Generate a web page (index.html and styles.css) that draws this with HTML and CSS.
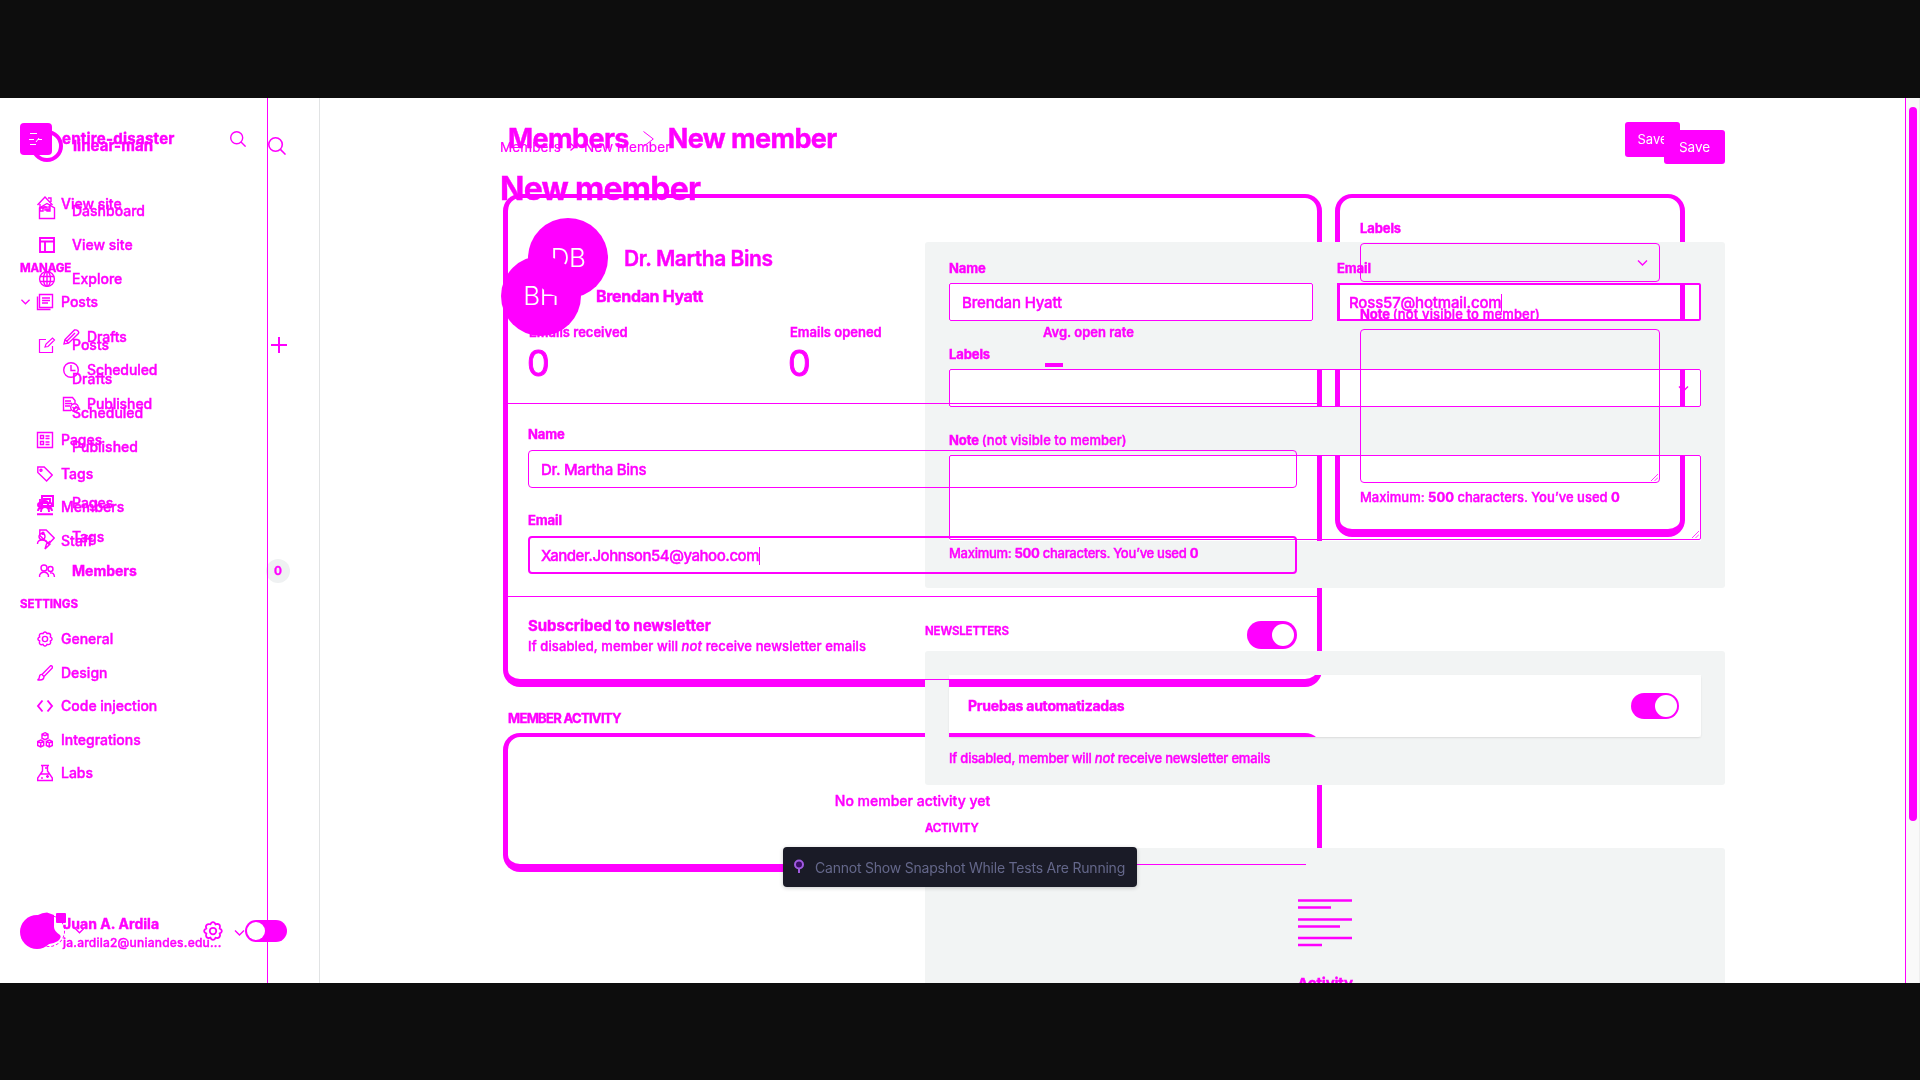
FILE: index.html
```html
<!DOCTYPE html>
<html lang="en">
<head>
<meta charset="utf-8">
<title>Members - New member</title>
<link rel="stylesheet" href="styles.css">
</head>
<body>
<svg class="defs" aria-hidden="true">
  <symbol id="search" viewBox="0 0 16 16"><circle cx="6.7" cy="6.7" r="6"/><path d="M11 11l4.600 4.600"/></symbol>
  <symbol id="gear" viewBox="0 0 16 16"><circle cx="8" cy="8" r="2.600"/><path d="M6.500 1.700Q8 .2 9.500 1.700L10 2.700L11.300 2.300Q13.600 2.300 13.600 4.600L13.300 6L14.300 6.600Q15.800 8 14.300 9.500L13.300 10L13.700 11.300Q13.500 13.600 11.400 13.600L10 13.300L9.500 14.300Q8 15.800 6.500 14.300L6 13.300L4.700 13.700Q2.400 13.500 2.400 11.400L2.700 10L1.700 9.500Q.2 8 1.700 6.500L2.700 6L2.300 4.700Q2.500 2.400 4.600 2.400L6 2.700Z"/></symbol>
  <symbol id="tag" viewBox="0 0 16 16"><path d="M.8 1h6.400l8 8-5.600 6L.8 6.500z"/><circle cx="4" cy="4.200" r="1"/></symbol>
  <symbol id="chev" viewBox="0 0 10 6"><path d="M.5.5L5 5L9.500.5"/></symbol>
  <symbol id="grip" viewBox="0 0 8 8"><path d="M0 8L8 0M4 8L8 4"/></symbol>
</svg>
<div class="stage">

  <div class="layer frames">
    <div class="frame-col"><div class="frame details"></div><div class="frame events"></div></div>
    <div class="frame notes"></div>
  </div>

  <div class="layer new">
    <aside class="side">
      <header class="side-head">
        <span class="ring"></span><b class="site">linear-man</b>
        <svg class="ic find"><use href="#search"/></svg>
      </header>
      <nav>
        <a class="item"><svg class="ic" viewBox="0 0 16 16"><path d="M.5 5V15.500H15.500V5L8 .5ZM6 3v4h4V3M1 5h4"/></svg>Dashboard</a>
        <a class="item"><svg class="ic thick" viewBox="0 0 16 16"><path d="M1 1h14v14H1zM1 4.500h14M6 4.500V15"/></svg>View site</a>
        <a class="item"><svg class="ic" viewBox="0 0 16 16"><circle cx="8" cy="8" r="7.400"/><ellipse cx="8" cy="8" rx="3.500" ry="7.400"/><path d="M1 5.500h14M1 10.500h14M8 .5v15"/></svg>Explore</a>
        <a class="item gap-a"><svg class="ic thin" viewBox="0 0 16 16"><path d="M7 2.500H.5v13h13V9M6 10l1-3 6.500-6 2 2-6.500 6.500z"/></svg>Posts<svg class="plus" viewBox="0 0 16 16"><path d="M8 0v16M0 8h16"/></svg></a>
        <a class="item"><span class="ic"></span>Drafts</a>
        <a class="item"><span class="ic"></span>Scheduled</a>
        <a class="item"><span class="ic"></span>Published</a>
        <a class="item gap-b"><svg class="ic thick" viewBox="0 0 16 16"><path d="M3 1h11v10H3zM1 4v8h11M5 4h6v4H5z"/></svg>Pages</a>
        <a class="item"><svg class="ic"><use href="#tag"/></svg>Tags</a>
        <a class="item on"><svg class="ic" viewBox="0 0 16 16"><circle cx="5" cy="5" r="3"/><circle cx="11.500" cy="6" r="2.500"/><path d="M.6 14v-2Q2 9 5 9t4.400 3v2M11 10q4-1 4.500 4"/></svg>Members<i class="count">0</i></a>
      </nav>
      <footer class="side-foot">
        <span class="face"></span><svg class="chev a"><use href="#chev"/></svg>
        <svg class="ic cog"><use href="#gear"/></svg><span class="night"></span>
      </footer>
    </aside>
    <main class="main">
      <div class="crumbs"><span>Members</span><svg class="arrow" viewBox="0 0 5 8"><path d="M.5.5L4.500 4L.5 7.500"/></svg><span>New member</span><button class="save over">Save</button></div>
      <h1>New member</h1>
      <div class="cols">
        <div class="person"><span class="avatar over">BH</span><b>Brendan Hyatt</b></div>
        <div class="panels">
          <section class="panel p-form">
            <div class="pair">
              <label><span class="lab">Name</span><span class="field">Brendan Hyatt</span></label>
              <label><span class="lab">Email</span><span class="field focus">Ross57@hotmail.com<i class="caret"></i></span></label>
            </div>
            <label><span class="lab">Labels</span><span class="field pick"><svg class="chev"><use href="#chev"/></svg></span></label>
            <label><span class="lab">Note <em>(not visible to member)</em></span><span class="field area"><svg class="grip"><use href="#grip"/></svg></span></label>
            <p class="max">Maximum: <b>500</b> characters. You’ve used <b>0</b></p>
          </section>
          <h4>NEWSLETTERS</h4>
          <section class="panel p-news">
            <div class="row"><b>Pruebas automatizadas</b><span class="toggle small"></span></div>
            <p class="hint">If disabled, member will <i>not</i> receive newsletter emails</p>
          </section>
          <h4>ACTIVITY</h4>
          <section class="panel p-act">
            <svg class="lines" viewBox="0 0 54 48"><path d="M0 1.500h54M0 8.500h33M0 20.500h54M0 27.500h42M0 39h54M0 46h24"/></svg>
            <b>Activity</b>
          </section>
        </div>
      </div>
    </main>
    <div class="scroll"><span></span></div>
  </div>

  <div class="layer old">
    <aside class="side">
      <header class="side-head">
        <svg class="logo" viewBox="0 0 32 32"><rect width="32" height="32" rx="4"/><path d="M10 10.500h7M9 16.500h5M18 16.500h4M16 19l3-4M10 21.500h6"/></svg>
        <b class="site">entire-disaster</b>
        <svg class="ic find"><use href="#search"/></svg>
      </header>
      <nav>
        <a class="item"><svg class="ic" viewBox="0 0 16 16"><path d="M.5 9L8 1l7.500 8M11 2h3v4M3 8v7h3v-4h4v4h3V8"/></svg>View site</a>
        <h5 class="first">MANAGE</h5>
        <a class="item posts"><svg class="chev"><use href="#chev"/></svg><svg class="ic" viewBox="0 0 16 16"><path d="M2.500.5h13v13h-13zM.5 2.500v13h13M5 4h8M5 6.500h8M5 9h6"/></svg>Posts</a>
        <div class="subs">
          <a class="item"><svg class="ic" viewBox="0 0 16 16"><path d="M1 15l1-4.500L11.500 1Q13.500.5 15 2t0 3L5.500 14.200zM4 12l8-8M2 10.500l3.500 3.500"/></svg>Drafts</a>
          <a class="item"><svg class="ic" viewBox="0 0 16 16"><circle cx="8" cy="8" r="7.300"/><path d="M8 3v5.500h4.500"/></svg>Scheduled</a>
          <a class="item"><svg class="ic" viewBox="0 0 16 16"><path d="M8 14.500H.5v-13h9l2.500 3V7M2 5h6M2 7.500h7M2 10h5"/><circle cx="11.500" cy="11.500" r="3.800"/><path d="M9.500 11l2 2 2-3"/></svg>Published</a>
        </div>
        <div class="group">
          <a class="item"><svg class="ic" viewBox="0 0 16 16"><path d="M.5.5h15v15H.5zM3.500 3.500h3v3h-3zM3.500 9.500h3v3h-3zM8.500 4h4M8.500 6.500h4M8.500 10h4M8.500 12.500h4"/></svg>Pages</a>
          <a class="item"><svg class="ic"><use href="#tag"/></svg>Tags</a>
          <a class="item"><svg class="ic thick" viewBox="0 0 16 16"><circle cx="8" cy="5" r="3"/><circle cx="3" cy="6" r="2"/><circle cx="13" cy="6" r="2"/><path d="M4 13q0-5 4-5t4 5M1 12q0-3 3-3M15 12q0-3-3-3M0 15.300h16"/></svg>Members</a>
          <a class="item"><svg class="ic" viewBox="0 0 16 16"><circle cx="5" cy="3.500" r="3"/><path d="M.5 11q0-4 4.500-4 4 0 5 2l3 2-5 5 1.500-5 4-3"/></svg>Staff</a>
        </div>
        <h5 class="second">SETTINGS</h5>
        <div class="group b">
          <a class="item"><svg class="ic"><use href="#gear"/></svg>General</a>
          <a class="item"><svg class="ic" viewBox="0 0 16 16"><path d="M.5 15q2-1 2-3.500Q3 9 5 9.500L13.500.8Q15.800.3 15.300 3L7 11.500Q7 15 3 15zM5 9.500l2 2"/></svg>Design</a>
          <a class="item"><svg class="ic thick" viewBox="0 0 16 16"><path d="M5.500 2.500L1 8l4.500 5.500M10.500 2.500L15 8l-4.500 5.500"/></svg>Code injection</a>
          <a class="item"><svg class="ic" viewBox="0 0 16 16"><path d="M8 .7l3 1.500v4L8 7.700 5 6.200v-4zM3.700 8l3 1.500v4l-3 1.500-3-1.500v-4zM12.300 8l3 1.500v4l-3 1.500-3-1.500v-4zM5 2.200l3 1.500 3-1.500M.7 9.500l3 1.500 3-1.500M9.300 9.500l3 1.500 3-1.500M3.700 11v4M12.300 11v4"/></svg>Integrations</a>
          <a class="item"><svg class="ic" viewBox="0 0 16 16"><path d="M4 .5h8M5.500.5V6L.7 13v2.500h14.600V13L10.500 6V.5M3 9h10M5 12v2M9 11.500h3M10.500 10v3M8 3h2"/></svg>Labs</a>
        </div>
      </nav>
      <footer class="side-foot">
        <svg class="face" viewBox="0 0 46 38"><circle cx="17" cy="20" r="17"/><path d="M12 12L18 3Q22 .5 27 .5L34 3v12q0 4 6 8 2 2-2 6-8 5-16 2z"/><rect x="36" y="1" width="10" height="10" rx="1"/></svg>
        <div class="who"><b>Juan A. Ardila</b><span>ja.ardila2@uniandes.edu...</span></div>
        <svg class="chev"><use href="#chev"/></svg>
      </footer>
    </aside>
    <main class="main">
      <header class="title"><span>Members</span><svg class="arrow" viewBox="0 0 11 16"><path d="M.5.5L10.300 8L.5 15.500"/></svg><span>New member</span><button class="save">Save</button></header>
      <div class="cols">
        <div class="left">
          <section class="card details">
            <div class="person"><span class="avatar">DB</span><b>Dr. Martha Bins</b></div>
            <div class="stats">
              <div><b>Emails received</b><span>0</span></div>
              <div><b>Emails opened</b><span>0</span></div>
              <div><b>Avg. open rate</b><span class="none"></span></div>
            </div>
            <div class="form">
              <label><span class="lab">Name</span><span class="field">Dr. Martha Bins</span></label>
              <label><span class="lab">Email</span><span class="field focus">Xander.Johnson54@yahoo.com<i class="caret"></i></span></label>
            </div>
            <div class="sub">
              <div><b>Subscribed to newsletter</b><p class="hint">If disabled, member will <i>not</i> receive newsletter emails</p></div>
              <span class="toggle"></span>
            </div>
          </section>
          <h4>MEMBER ACTIVITY</h4>
          <section class="card events">No member activity yet</section>
        </div>
        <section class="notes">
          <label><span class="lab">Labels</span><span class="field pick"><svg class="chev"><use href="#chev"/></svg></span></label>
          <label><span class="lab">Note <em>(not visible to member)</em></span><span class="field area"><svg class="grip"><use href="#grip"/></svg></span></label>
          <p class="max">Maximum: <b>500</b> characters. You’ve used <b>0</b></p>
        </section>
      </div>
    </main>
  </div>

  <div class="toast"><svg viewBox="0 0 12 15"><circle cx="6" cy="5.500" r="4"/><path d="M6 9.500v4.500"/></svg><span>Cannot Show Snapshot While Tests Are Running</span></div>
</div>
</body>
</html>
```
FILE: styles.css
```css
:root { --m: #ff00ff; --g: #f2f4f4; }
* { box-sizing: border-box; margin: 0; padding: 0; }
body { width: 1920px; height: 1080px; overflow: hidden; padding: 98px 0 97px; background: #0d0d0d; color: var(--m); font: 500 14px/20px Inter, "Liberation Sans", sans-serif; }
svg { fill: none; stroke: var(--m); stroke-width: 1.4; flex: none; overflow: visible; }
.defs { display: none; }
.thick { stroke-width: 1.900; }
.thin { stroke-width: 1.2; }
em { font-style: normal; font-weight: 500; }
button { border: 0; font: inherit; }
.stage { position: relative; display: grid; height: 885px; overflow: hidden; background: #fff; }
.layer { grid-area: 1 / 1; display: flex; height: 885px; overflow: hidden; -webkit-text-stroke: .4px var(--m); }
.old { position: relative; z-index: 1; }

/* card outlines */
.frames { padding: 96px 0 0 503px; gap: 13px; align-items: flex-start; }
.frame-col { display: flex; flex-direction: column; gap: 46px; width: 819px; }
.frame { border: solid var(--m); border-width: 4px 5px 8px; border-radius: 17px; }
.frame.details { height: 493px; }
.frame.events { height: 139px; }
.frame.notes { width: 350px; height: 343px; }

/* shared pieces */
.side { display: flex; flex-direction: column; flex: none; }
.side-head { display: flex; align-items: center; }
.item { display: flex; align-items: center; white-space: nowrap; }
.ic { width: 16px; height: 16px; flex: none; }
.chev { width: 11px; height: 6px; }
.grip { width: 7px; height: 7px; stroke-width: .9; }
.avatar { display: flex; align-items: center; justify-content: center; width: 80px; height: 80px; border-radius: 50%; background: var(--m); color: #fff; font-size: 26px; font-weight: 300; -webkit-text-stroke: 0; flex: none; }
.person { display: flex; align-items: center; white-space: nowrap; }
.over { position: relative; z-index: 2; mix-blend-mode: multiply; }
.save { margin-left: auto; background: var(--m); color: #fff; border-radius: 3px; font-size: 13px; font-weight: 400; -webkit-text-stroke: 0; }
label { display: block; }
.lab { display: block; font-size: 13px; font-weight: 700; letter-spacing: -.1px; white-space: nowrap; }
.field { display: flex; align-items: center; height: 38px; padding: 1px 0 0 12px; border: 1px solid var(--m); border-radius: 4px; font-size: 15px; font-weight: 500; letter-spacing: -.3px; }
.focus { border-width: 2px; padding-left: 11px; }
.caret { width: 1px; height: 18px; background: var(--m); }
.pick { justify-content: flex-end; }
.area { align-items: flex-end; justify-content: flex-end; padding: 0 1px 1px 0; }
.max, .hint { font-size: 13px; white-space: nowrap; }
.max b { font-weight: 700; }
.toggle { width: 50px; height: 28px; padding: 3px; border-radius: 14px; background: var(--m); display: flex; justify-content: flex-end; flex: none; }
.toggle::after { content: ""; width: 22px; height: 22px; border-radius: 50%; background: #fff; }
.toggle.small { width: 48px; height: 26px; padding: 2px; }

/* narrow-sidebar view */
.old .side { width: 268px; border-right: 1px solid var(--m); }
.old .side-head { height: 80px; padding: 1px 21px 0 20px; margin-bottom: 9px; }
.logo { width: 32px; height: 32px; fill: var(--m); stroke: none; }
.logo path { stroke: #fff; stroke-width: 1; fill: none; }
.site { font-size: 15px; font-weight: 700; white-space: nowrap; }
.old .site { margin-left: 10px; letter-spacing: .25px; }
.old .find { margin-left: auto; }
.old .item { height: 33.600px; padding-left: 37px; gap: 8px; }
.old h5 { height: 34px; padding-left: 20px; font-size: 11.500px; line-height: 35px; font-weight: 700; }
.old h5.first { margin-top: 30.400px; letter-spacing: -.1px; }
.old h5.second { margin-top: 29.400px; }
.old .posts { height: 34px; padding-left: 21px; gap: 0; }
.posts .chev { width: 9px; margin-right: 7px; }
.posts .ic { margin-right: 8px; }
.subs { margin-top: 1px; }
.old .subs .item { padding-left: 63px; gap: 8px; letter-spacing: -.1px; }
.group { margin-top: 2.400px; }
.group.b { margin-top: 1.200px; }
.old .side-foot { display: flex; align-items: center; height: 98px; margin-top: auto; padding: 0 0 3px 20px; }
.face { flex: none; }
.old .face { width: 46px; height: 38px; margin-right: -3px; margin-top: -3px; fill: var(--m); stroke: none; }
.who { width: 171px; font-size: 12px; line-height: 19px; white-space: nowrap; letter-spacing: .22px; }
.who b, .who span { display: block; }
.who b { font-size: 14px; font-weight: 700; letter-spacing: .05px; }
.old .main { flex: none; width: 1417px; padding-left: 240px; }
.title { display: flex; align-items: center; height: 80px; padding-top: 2px; margin-bottom: 20px; font-size: 27px; font-weight: 700; letter-spacing: -.62px; white-space: nowrap; }
.title .arrow { width: 11px; height: 16px; margin: 0 14px 0 14px; stroke-width: 1; }
.old .save { width: 55px; height: 35px; letter-spacing: 0; margin-right: 5px; }
.old .cols { display: grid; grid-template-columns: 809px 340px; gap: 23px; }
.old .card.details { height: 482px; }
.old .card::after { content: ""; display: block; height: 1px; margin: 0 11px; background: var(--m); }
.old .person { padding: 20px 0 24px 20px; gap: 16px; font-size: 21px; letter-spacing: -.45px; }
.old .person b { font-weight: 600; padding-top: 2px; }
.stats { display: grid; grid-template-columns: 261px 253px 1fr; height: 82px; padding-left: 21px; border-bottom: 1px solid var(--m); }
.stats b { display: block; font-size: 13px; font-weight: 600; margin-bottom: 1px; }
.stats span { display: block; font-size: 36px; line-height: 40px; font-weight: 400; margin-left: -2px; -webkit-text-stroke: .9px var(--m); }
.stats .none { width: 18px; height: 4px; margin: 21px 0 0 2px; background: var(--m); }
.form { height: 193px; padding: 20px 20px 0; border-bottom: 1px solid var(--m); }
.form .lab { height: 26px; }
.form .field { margin-bottom: 22px; }
.old .focus { letter-spacing: -.47px; }
.sub { display: flex; align-items: flex-start; justify-content: space-between; height: 82px; padding: 19px 20px 0 20px; }
.sub b { font-size: 15px; font-weight: 700; letter-spacing: -.02px; }
.old .hint { letter-spacing: .11px; }
.sub .toggle { margin-top: 5px; }
.old h4 { padding-top: 28px; height: 57px; font-size: 13px; font-weight: 700; letter-spacing: -.68px; }
.old .card.events { height: 128px; display: flex; flex-direction: column; text-align: center; line-height: 127px; font-size: 14px; }
.old .notes { padding: 20px 20px 0; }
.old .notes .lab { height: 25px; }
.old .notes em { letter-spacing: .15px; }
.old .notes .pick { height: 39px; margin-bottom: 22px; padding-right: 11px; }
.old .notes .area { height: 154px; margin-bottom: 4px; }

/* wide-sidebar view */
.new .side { width: 320px; border-right: 1px solid #e1e3e4; }
.new .side-head { height: 96px; padding: 0 33px 0 31px; }
.ring { width: 32px; height: 32px; border: 4px solid var(--m); border-radius: 50%; }
.new .site { margin-left: 10px; letter-spacing: .05px; }
.new .find { width: 18px; height: 18px; margin-left: auto; }
.new .item { height: 34px; padding-left: 39px; gap: 17px; }
.new .gap-a { margin-top: 32px; }
.new .gap-b { margin-top: 22px; }
.new .on { font-weight: 700; }
.plus { width: 16px; height: 16px; margin: 0 32px 0 auto; stroke-width: 2; }
.count { display: grid; place-items: center; width: 24px; height: 24px; margin: 0 29px 0 auto; border-radius: 50%; background: #eff1f2; font: 600 12px/1 Inter, sans-serif; }
.new .side-foot { display: flex; align-items: center; height: 98px; margin-top: auto; padding: 0 0 6px 33px; }
.new .face { width: 32px; height: 32px; border: 1px dashed var(--m); border-radius: 50%; }
.new .side-foot .chev { width: 9px; margin: 0 0 0 10px; }
.new .cog { width: 20px; height: 20px; margin-left: 119px; }
.night { width: 42px; height: 22px; padding: 2px; margin-left: 22px; border-radius: 11px; background: var(--m); }
.night::after { content: ""; display: block; width: 18px; height: 18px; border-radius: 50%; background: #fff; }
.new .main { flex: none; width: 1585px; padding-left: 180px; }
.crumbs { display: flex; align-items: center; height: 69px; padding: 29px 180px 0 0; font-size: 13.500px; font-weight: 400; letter-spacing: .1px; -webkit-text-stroke: .2px var(--m); }
.crumbs .arrow { width: 5px; height: 8px; margin: 0 9px; }
.new .save { width: 61px; height: 34px; font-size: 13.500px; -webkit-text-stroke: 0; }
.new h1 { height: 75px; padding-top: 2px; font-size: 32px; line-height: 40px; font-weight: 700; letter-spacing: -.72px; }
.new .cols { display: grid; grid-template-columns: 425px 800px; }
.new .person { height: 80px; margin: 14px 0 0 1px; gap: 15px; font-size: 16px; letter-spacing: -.33px; }
.new .person b { margin-top: -1px; }
.panel { position: relative; isolation: isolate; }
.panel::before { content: ""; position: absolute; inset: 0; z-index: -1; border-radius: 3px; background: var(--g); }
.p-form { height: 346px; padding: 10px 24px 0; }
.p-form::before { clip-path: path(evenodd, "M0 0H800V346H0ZM24 41h364v38H24ZM412 41h364v38H412ZM24 127h752v38H24ZM24 213h752v86H24Z"); }
.p-form .lab { height: 31px; line-height: 32px; }
.p-form .field { border-radius: 2px; margin-bottom: 17px; letter-spacing: -.17px; }
.p-form .focus { padding-left: 10px; }
.p-form em { letter-spacing: .05px; }
.p-form .pick { padding-right: 11px; }
.p-form .area { height: 85px; margin-bottom: 3px; }
.p-form .max { letter-spacing: -.28px; }
.pair { display: grid; grid-template-columns: 364px 364px; gap: 24px; }
.new h4 { height: 63px; padding-top: 33px; font-size: 11.500px; font-weight: 600; letter-spacing: -.15px; }
.p-news { height: 134px; padding: 24px 24px 0; }
.p-news::before { clip-path: path(evenodd, "M0 0H800V134H0ZM24 24h752v62H24Z"); }
.row { display: flex; align-items: center; justify-content: space-between; height: 62px; padding: 0 22px 0 19px; border-radius: 3px; box-shadow: 0 1px 2px #0000001a; margin-bottom: 11px; letter-spacing: -.23px; }
.row b { font-weight: 700; }
.new .hint { letter-spacing: -.2px; }
.p-act { height: 200px; padding-top: 51px; display: flex; flex-direction: column; align-items: center; font-size: 15px; letter-spacing: -.2px; }
.lines { width: 54px; height: 48px; stroke-width: 2.600; margin-bottom: 27px; }
.scroll { width: 15px; padding: 9px 2px 0 3px; border-left: 1px solid var(--m); border-right: 1px solid #eee; background: #f9f9f9; }
.scroll span { display: block; width: 8px; height: 714px; border-radius: 4px; background: var(--m); }

/* notice over the page */
.toast { position: absolute; left: 783px; top: 749px; z-index: 3; display: flex; align-items: center; gap: 10px; width: 354px; height: 40px; padding: 1px 0 0 10px; border-radius: 4px; background: #1a1b27; box-shadow: 0 1px 4px #0003; color: #64678a; font-size: 14px; font-weight: 400; letter-spacing: -.22px; white-space: nowrap; }
.toast svg { width: 12px; height: 15px; margin-top: -2px; stroke: #a05ae0; stroke-width: 2; }
.toast circle { fill: #3a0d66; }
```
